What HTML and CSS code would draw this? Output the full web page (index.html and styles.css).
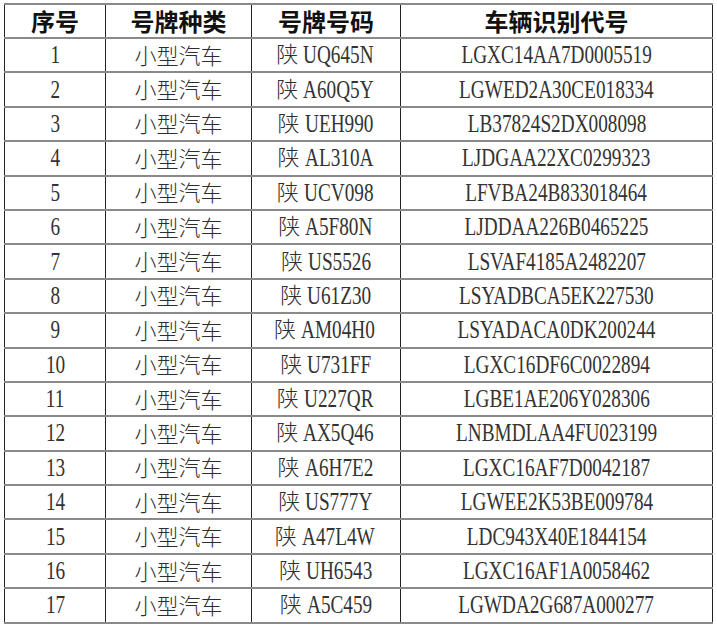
FILE: index.html
```html
<!DOCTYPE html>
<html lang="zh-CN">
<head>
<meta charset="utf-8">
<title>车辆信息表</title>
<link rel="stylesheet" href="styles.css">
</head>
<body>
<table class="reg">
  <colgroup>
    <col class="c-no"><col class="c-type"><col class="c-plate"><col class="c-vin">
  </colgroup>
  <thead>
    <tr><th>序号</th><th>号牌种类</th><th>号牌号码</th><th>车辆识别代号</th></tr>
  </thead>
  <tbody>
    <tr><td><span class="lt">1</span></td><td>小型汽车</td><td>陕<span class="lt plate">UQ645N</span></td><td><span class="lt">LGXC14AA7D0005519</span></td></tr>
    <tr><td><span class="lt">2</span></td><td>小型汽车</td><td>陕<span class="lt plate">A60Q5Y</span></td><td><span class="lt">LGWED2A30CE018334</span></td></tr>
    <tr><td><span class="lt">3</span></td><td>小型汽车</td><td>陕<span class="lt plate">UEH990</span></td><td><span class="lt">LB37824S2DX008098</span></td></tr>
    <tr><td><span class="lt">4</span></td><td>小型汽车</td><td>陕<span class="lt plate">AL310A</span></td><td><span class="lt">LJDGAA22XC0299323</span></td></tr>
    <tr><td><span class="lt">5</span></td><td>小型汽车</td><td>陕<span class="lt plate">UCV098</span></td><td><span class="lt">LFVBA24B833018464</span></td></tr>
    <tr><td><span class="lt">6</span></td><td>小型汽车</td><td>陕<span class="lt plate">A5F80N</span></td><td><span class="lt">LJDDAA226B0465225</span></td></tr>
    <tr><td><span class="lt">7</span></td><td>小型汽车</td><td>陕<span class="lt plate">US5526</span></td><td><span class="lt">LSVAF4185A2482207</span></td></tr>
    <tr><td><span class="lt">8</span></td><td>小型汽车</td><td>陕<span class="lt plate">U61Z30</span></td><td><span class="lt">LSYADBCA5EK227530</span></td></tr>
    <tr><td><span class="lt">9</span></td><td>小型汽车</td><td>陕<span class="lt plate">AM04H0</span></td><td><span class="lt">LSYADACA0DK200244</span></td></tr>
    <tr><td><span class="lt">10</span></td><td>小型汽车</td><td>陕<span class="lt plate">U731FF</span></td><td><span class="lt">LGXC16DF6C0022894</span></td></tr>
    <tr><td><span class="lt">11</span></td><td>小型汽车</td><td>陕<span class="lt plate">U227QR</span></td><td><span class="lt">LGBE1AE206Y028306</span></td></tr>
    <tr><td><span class="lt">12</span></td><td>小型汽车</td><td>陕<span class="lt plate">AX5Q46</span></td><td><span class="lt">LNBMDLAA4FU023199</span></td></tr>
    <tr><td><span class="lt">13</span></td><td>小型汽车</td><td>陕<span class="lt plate">A6H7E2</span></td><td><span class="lt">LGXC16AF7D0042187</span></td></tr>
    <tr><td><span class="lt">14</span></td><td>小型汽车</td><td>陕<span class="lt plate">US777Y</span></td><td><span class="lt">LGWEE2K53BE009784</span></td></tr>
    <tr><td><span class="lt">15</span></td><td>小型汽车</td><td>陕<span class="lt plate">A47L4W</span></td><td><span class="lt">LDC943X40E1844154</span></td></tr>
    <tr><td><span class="lt">16</span></td><td>小型汽车</td><td>陕<span class="lt plate">UH6543</span></td><td><span class="lt">LGXC16AF1A0058462</span></td></tr>
    <tr><td><span class="lt">17</span></td><td>小型汽车</td><td>陕<span class="lt plate">A5C459</span></td><td><span class="lt">LGWDA2G687A000277</span></td></tr>
  </tbody>
</table>
</body>
</html>
```

FILE: styles.css
```css
html, body {
  margin: 0;
  padding: 0;
  background: #ffffff;
}

body {
  padding: 3px 0 0 4px;
}

.reg {
  border-collapse: collapse;
  table-layout: fixed;
  width: 708px;
  font-family: "Noto Sans CJK SC", sans-serif;
  color: #2e2e2e;
}

.c-no { width: 101px; }
.c-type { width: 146px; }
.c-plate { width: 149px; }
.c-vin { width: 312px; }

.reg th,
.reg td {
  padding: 0;
  text-align: center;
  vertical-align: middle;
  white-space: nowrap;
  border-left: 1px solid #222;
  border-right: 1px solid #222;
  border-top: 2px solid #8a8a8a;
  border-bottom: 2px solid #8a8a8a;
}

.reg th {
  height: 32px;
  font-size: 24px;
  font-weight: 700;
  color: #111;
  line-height: 1;
}

.reg td {
  height: 29.4px;
  padding-bottom: 3px;
  font-size: 22px;
  font-weight: 300;
  line-height: 1;
}

.lt {
  display: inline-block;
  font-family: "Liberation Serif", serif;
  font-size: 25px;
  font-weight: 400;
  line-height: 1;
  transform: scaleX(0.77);
  color: #333;
  position: relative;
  top: 1px;
}

.plate {
  margin-left: 5px;
  transform-origin: left center;
  margin-right: -19px;
}
```
